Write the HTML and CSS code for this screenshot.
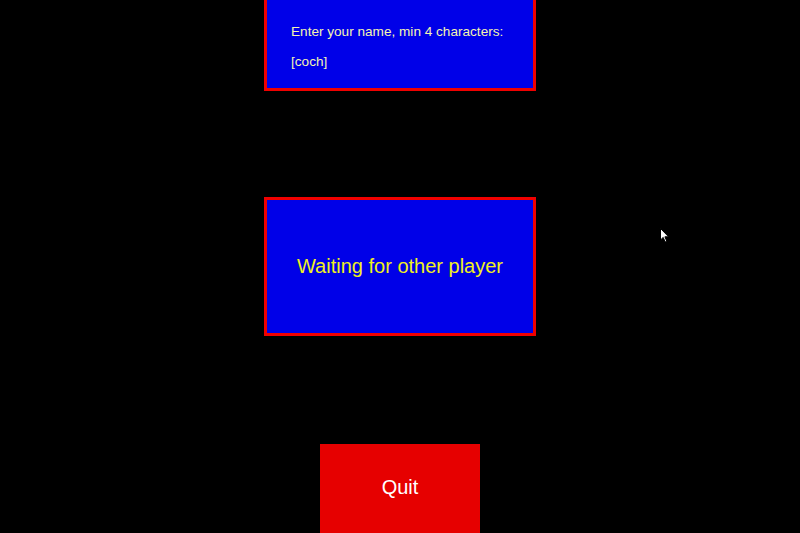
FILE: index.html
```html
<!DOCTYPE html>
<html>
<head>
<meta charset="utf-8">
<link rel="stylesheet" href="styles.css">
</head>
<body>
<div class="screen">
  <div class="panel name-panel">
    <p class="label">Enter your name, min 4 characters:</p>
    <p class="value">[coch]</p>
  </div>
  <div class="panel wait-panel">
    <p class="wait">Waiting for other player</p>
  </div>
  <button class="quit">Quit</button>
  <svg class="cursor" width="10" height="16" viewBox="0 0 10 16">
    <path d="M0.5 0.5 L0.5 12 L3.2 9.4 L5.2 14 L6.8 13.3 L4.9 8.8 L8.6 8.8 Z" fill="#fff" stroke="#000" stroke-width="1"/>
  </svg>
</div>
</body>
</html>
```
FILE: styles.css
```css
html, body {
  margin: 0;
  padding: 0;
  background: #000;
  overflow: hidden;
}
.screen {
  position: relative;
  width: 800px;
  height: 533px;
  display: flex;
  flex-direction: column;
  align-items: center;
  font-family: "Liberation Sans", Arial, sans-serif;
}
.panel {
  box-sizing: border-box;
  width: 272px;
  background: #0000e8;
  border: 3px solid #f00000;
}
.name-panel {
  margin-top: -30px;
  height: 121px;
  padding: 0 0 0 24px;
}
.label {
  margin: 50px 0 0 0;
  font-size: 13.6px;
  line-height: 18px;
  color: #f4f4b0;
}
.value {
  margin: 12px 0 0 0;
  font-size: 13.6px;
  line-height: 18px;
  color: #f4f4b0;
}
.wait-panel {
  margin-top: 106px;
  height: 140px;
  display: flex;
  align-items: center;
  justify-content: center;
}
.wait {
  margin: 0;
  font-size: 20px;
  color: #f0f020;
}
.quit {
  flex-shrink: 0;
  margin-top: 108px;
  width: 160px;
  height: 89px;
  border: none;
  background: #e60000;
  color: #fff;
  font-family: "Liberation Sans", Arial, sans-serif;
  font-size: 20px;
  padding: 0 0 2px 0;
}
.cursor {
  position: absolute;
  left: 660px;
  top: 228px;
}
```
